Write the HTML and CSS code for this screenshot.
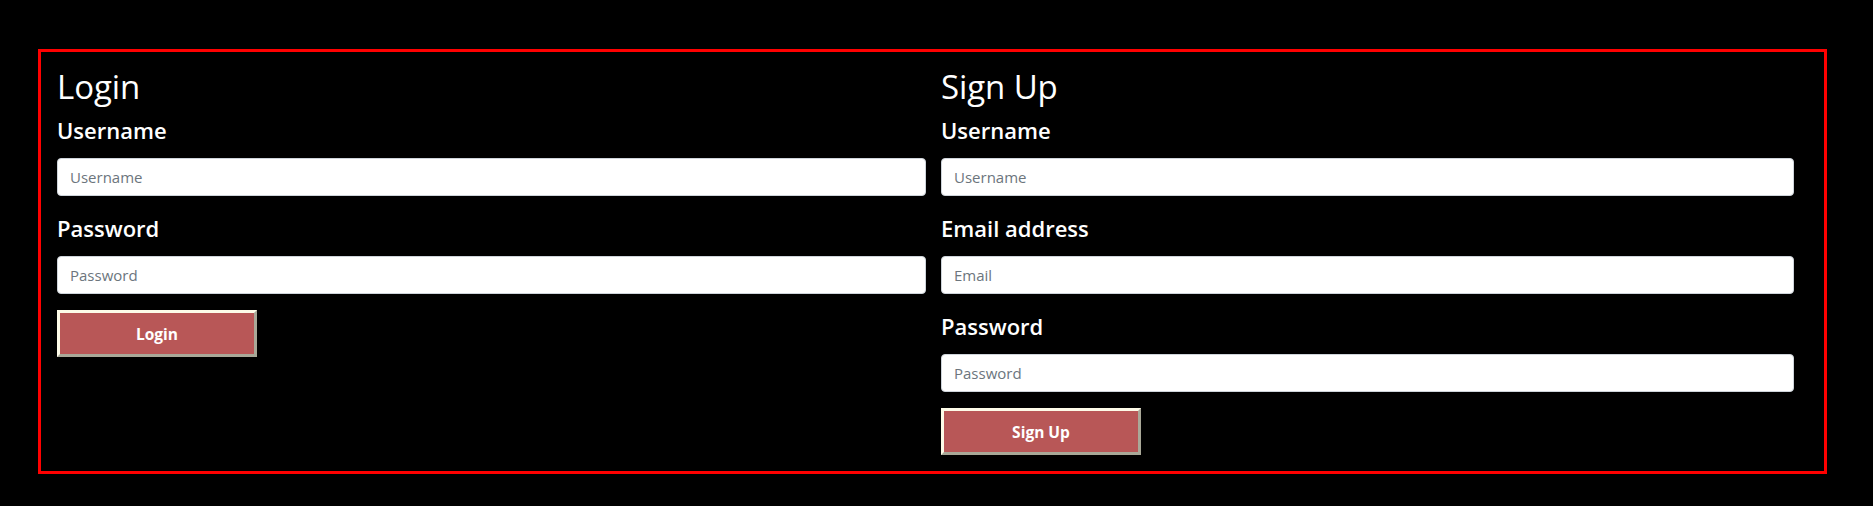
FILE: index.html
```html
<!DOCTYPE html>
<html lang="en">
<head>
<meta charset="utf-8">
<title>Login / Sign Up</title>
<link rel="stylesheet" href="styles.css">
</head>
<body>
<div class="frame">
  <div class="columns">
    <form class="panel panel-login">
      <h2 class="title">Login</h2>
      <div class="field">
        <h5 class="label">Username</h5>
        <input class="input" type="text" placeholder="Username">
      </div>
      <div class="field">
        <h5 class="label">Password</h5>
        <input class="input" type="password" placeholder="Password">
      </div>
      <button class="btn" type="button">Login</button>
    </form>
    <form class="panel panel-signup">
      <h2 class="title">Sign Up</h2>
      <div class="field">
        <h5 class="label">Username</h5>
        <input class="input" type="text" placeholder="Username">
      </div>
      <div class="field">
        <h5 class="label">Email address</h5>
        <input class="input" type="email" placeholder="Email">
      </div>
      <div class="field">
        <h5 class="label">Password</h5>
        <input class="input" type="password" placeholder="Password">
      </div>
      <button class="btn" type="button">Sign Up</button>
    </form>
  </div>
</div>
</body>
</html>
```

FILE: styles.css
```css
html, body {
  margin: 0;
  padding: 0;
  background: #000;
}
body {
  font-family: "Open Sans", "Noto Sans", "DejaVu Sans", sans-serif;
  color: #fff;
  padding: 49px 46px 0 38px;
}
.frame {
  box-sizing: border-box;
  height: 425px;
  border: 3px solid #ff0000;
  padding: 16px 30px 0 16px;
}
.columns {
  display: grid;
  grid-template-columns: 869px 853px;
  column-gap: 15px;
}
.panel {
  display: flex;
  flex-direction: column;
  align-items: flex-start;
  margin: 0;
}
.title {
  margin: 0 0 8px 0;
  font-size: 33px;
  font-weight: 500;
  line-height: 38px;
  letter-spacing: -0.1px;
}
.field {
  display: flex;
  flex-direction: column;
  align-self: stretch;
  margin-bottom: 16px;
}
.label {
  margin: 4px 0 16px 0;
  font-size: 22px;
  font-weight: 600;
  line-height: 24px;
  letter-spacing: 0;
}
.input {
  box-sizing: border-box;
  width: 100%;
  height: 38px;
  padding: 6px 12px;
  border: 1px solid #ced4da;
  border-radius: 4px;
  background: #fff;
  font-family: "Open Sans", "Noto Sans", sans-serif;
  font-size: 15px;
  color: #212529;
  outline: none;
}
.input::placeholder {
  color: #6c757d;
  opacity: 1;
}
.btn {
  box-sizing: border-box;
  width: 200px;
  height: 47px;
  border-width: 3px;
  border-style: solid;
  border-color: #fdfbe8 #a9a898 #a9a898 #fdfbe8;
  background: #b85757;
  color: #fff;
  font-family: "Open Sans", "Noto Sans", sans-serif;
  font-size: 15.5px;
  font-weight: 700;
  padding: 0;
  cursor: pointer;
}
```
